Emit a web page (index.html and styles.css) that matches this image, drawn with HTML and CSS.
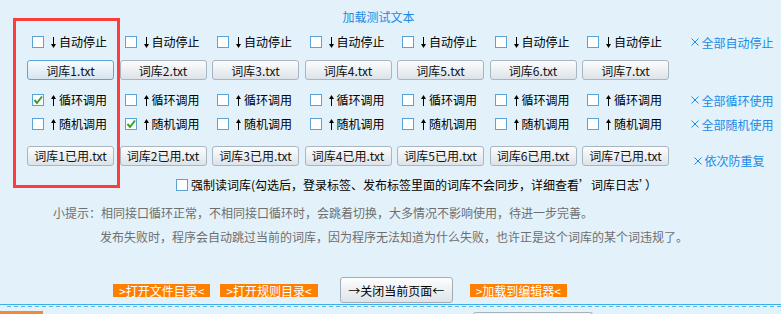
FILE: index.html
```html
<!DOCTYPE html>
<html lang="zh-CN">
<head>
    <meta charset="UTF-8">
    <title>加载测试文本</title>
    <link rel="stylesheet" href="styles.css">
</head>
<body>
<div class="page">
    <div class="title">加载测试文本</div>

    <div class="row r1">
        <label class="opt"><span class="cb"></span><svg class="arrow" width="5" height="11" viewBox="0 0 5 11"><path d="M2.5 0v8" stroke="#000" stroke-width="1"/><path d="M0 7h5l-2.5 4z"/></svg>自动停止</label>
        <label class="opt"><span class="cb"></span><svg class="arrow" width="5" height="11" viewBox="0 0 5 11"><path d="M2.5 0v8" stroke="#000" stroke-width="1"/><path d="M0 7h5l-2.5 4z"/></svg>自动停止</label>
        <label class="opt"><span class="cb"></span><svg class="arrow" width="5" height="11" viewBox="0 0 5 11"><path d="M2.5 0v8" stroke="#000" stroke-width="1"/><path d="M0 7h5l-2.5 4z"/></svg>自动停止</label>
        <label class="opt"><span class="cb"></span><svg class="arrow" width="5" height="11" viewBox="0 0 5 11"><path d="M2.5 0v8" stroke="#000" stroke-width="1"/><path d="M0 7h5l-2.5 4z"/></svg>自动停止</label>
        <label class="opt"><span class="cb"></span><svg class="arrow" width="5" height="11" viewBox="0 0 5 11"><path d="M2.5 0v8" stroke="#000" stroke-width="1"/><path d="M0 7h5l-2.5 4z"/></svg>自动停止</label>
        <label class="opt"><span class="cb"></span><svg class="arrow" width="5" height="11" viewBox="0 0 5 11"><path d="M2.5 0v8" stroke="#000" stroke-width="1"/><path d="M0 7h5l-2.5 4z"/></svg>自动停止</label>
        <label class="opt"><span class="cb"></span><svg class="arrow" width="5" height="11" viewBox="0 0 5 11"><path d="M2.5 0v8" stroke="#000" stroke-width="1"/><path d="M0 7h5l-2.5 4z"/></svg>自动停止</label>
        <a class="link"><svg class="x" width="8" height="8" viewBox="0 0 8 8"><path d="M0.5 0.5l7 7M7.5 0.5l-7 7" stroke="#1a8ae6" stroke-width="1"/></svg>全部自动停止</a>
    </div>

    <div class="row r2">
        <button class="btn active">词库1.txt</button>
        <button class="btn">词库2.txt</button>
        <button class="btn">词库3.txt</button>
        <button class="btn">词库4.txt</button>
        <button class="btn">词库5.txt</button>
        <button class="btn">词库6.txt</button>
        <button class="btn">词库7.txt</button>
    </div>

    <div class="row r3">
        <label class="opt"><span class="cb on"><svg width="10" height="10" viewBox="0 0 10 10"><path d="M1.5 5l2.5 3 5-6.5" fill="none" stroke="#3c9c2c" stroke-width="2"/></svg></span><svg class="arrow" width="5" height="11" viewBox="0 0 5 11"><path d="M2.5 3v8" stroke="#000" stroke-width="1"/><path d="M0 4h5l-2.5 -4z"/></svg>循环调用</label>
        <label class="opt"><span class="cb"></span><svg class="arrow" width="5" height="11" viewBox="0 0 5 11"><path d="M2.5 3v8" stroke="#000" stroke-width="1"/><path d="M0 4h5l-2.5 -4z"/></svg>循环调用</label>
        <label class="opt"><span class="cb"></span><svg class="arrow" width="5" height="11" viewBox="0 0 5 11"><path d="M2.5 3v8" stroke="#000" stroke-width="1"/><path d="M0 4h5l-2.5 -4z"/></svg>循环调用</label>
        <label class="opt"><span class="cb"></span><svg class="arrow" width="5" height="11" viewBox="0 0 5 11"><path d="M2.5 3v8" stroke="#000" stroke-width="1"/><path d="M0 4h5l-2.5 -4z"/></svg>循环调用</label>
        <label class="opt"><span class="cb"></span><svg class="arrow" width="5" height="11" viewBox="0 0 5 11"><path d="M2.5 3v8" stroke="#000" stroke-width="1"/><path d="M0 4h5l-2.5 -4z"/></svg>循环调用</label>
        <label class="opt"><span class="cb"></span><svg class="arrow" width="5" height="11" viewBox="0 0 5 11"><path d="M2.5 3v8" stroke="#000" stroke-width="1"/><path d="M0 4h5l-2.5 -4z"/></svg>循环调用</label>
        <label class="opt"><span class="cb"></span><svg class="arrow" width="5" height="11" viewBox="0 0 5 11"><path d="M2.5 3v8" stroke="#000" stroke-width="1"/><path d="M0 4h5l-2.5 -4z"/></svg>循环调用</label>
        <a class="link"><svg class="x" width="8" height="8" viewBox="0 0 8 8"><path d="M0.5 0.5l7 7M7.5 0.5l-7 7" stroke="#1a8ae6" stroke-width="1"/></svg>全部循环使用</a>
    </div>

    <div class="row r4">
        <label class="opt"><span class="cb"></span><svg class="arrow" width="5" height="11" viewBox="0 0 5 11"><path d="M2.5 3v8" stroke="#000" stroke-width="1"/><path d="M0 4h5l-2.5 -4z"/></svg>随机调用</label>
        <label class="opt"><span class="cb on"><svg width="10" height="10" viewBox="0 0 10 10"><path d="M1.5 5l2.5 3 5-6.5" fill="none" stroke="#3c9c2c" stroke-width="2"/></svg></span><svg class="arrow" width="5" height="11" viewBox="0 0 5 11"><path d="M2.5 3v8" stroke="#000" stroke-width="1"/><path d="M0 4h5l-2.5 -4z"/></svg>随机调用</label>
        <label class="opt"><span class="cb"></span><svg class="arrow" width="5" height="11" viewBox="0 0 5 11"><path d="M2.5 3v8" stroke="#000" stroke-width="1"/><path d="M0 4h5l-2.5 -4z"/></svg>随机调用</label>
        <label class="opt"><span class="cb"></span><svg class="arrow" width="5" height="11" viewBox="0 0 5 11"><path d="M2.5 3v8" stroke="#000" stroke-width="1"/><path d="M0 4h5l-2.5 -4z"/></svg>随机调用</label>
        <label class="opt"><span class="cb"></span><svg class="arrow" width="5" height="11" viewBox="0 0 5 11"><path d="M2.5 3v8" stroke="#000" stroke-width="1"/><path d="M0 4h5l-2.5 -4z"/></svg>随机调用</label>
        <label class="opt"><span class="cb"></span><svg class="arrow" width="5" height="11" viewBox="0 0 5 11"><path d="M2.5 3v8" stroke="#000" stroke-width="1"/><path d="M0 4h5l-2.5 -4z"/></svg>随机调用</label>
        <label class="opt"><span class="cb"></span><svg class="arrow" width="5" height="11" viewBox="0 0 5 11"><path d="M2.5 3v8" stroke="#000" stroke-width="1"/><path d="M0 4h5l-2.5 -4z"/></svg>随机调用</label>
        <a class="link"><svg class="x" width="8" height="8" viewBox="0 0 8 8"><path d="M0.5 0.5l7 7M7.5 0.5l-7 7" stroke="#1a8ae6" stroke-width="1"/></svg>全部随机使用</a>
    </div>

    <div class="row r5">
        <button class="btn">词库1已用.txt</button>
        <button class="btn">词库2已用.txt</button>
        <button class="btn">词库3已用.txt</button>
        <button class="btn">词库4已用.txt</button>
        <button class="btn">词库5已用.txt</button>
        <button class="btn">词库6已用.txt</button>
        <button class="btn">词库7已用.txt</button>
        <a class="link link-low"><svg class="x" width="8" height="8" viewBox="0 0 8 8"><path d="M0.5 0.5l7 7M7.5 0.5l-7 7" stroke="#1a8ae6" stroke-width="1"/></svg>依次防重复</a>
    </div>

    <div class="force">
        <label class="opt"><span class="cb"></span>强制读词库(勾选后，登录标签、发布标签里面的词库不会同步，详细查看’词库日志’）</label>
    </div>

    <p class="hint hint1">小提示：相同接口循环正常，不相同接口循环时，会跳着切换，大多情况不影响使用，待进一步完善。</p>
    <p class="hint hint2">发布失败时，程序会自动跳过当前的词库，因为程序无法知道为什么失败，也许正是这个词库的某个词违规了。</p>

    <div class="actions">
        <a class="tag tag1">&gt;打开文件目录&lt;</a>
        <a class="tag tag2">&gt;打开规则目录&lt;</a>
        <button class="close">→关闭当前页面←</button>
        <a class="tag tag3">&gt;加载到编辑器&lt;</a>
    </div>

    <div class="rule"></div>
    <div class="dash"></div>
    <div class="next">
        <span class="next-tab"></span>
        <span class="next-box"></span>
    </div>

    <div class="highlight"></div>
</div>
</body>
</html>
```

FILE: styles.css
```css
body {
    margin: 0;
    background-color: #e3f2fa;
    font-family: "Noto Sans CJK SC", sans-serif;
    font-size: 12px;
    color: #000;
}
.page {
    position: relative;
    height: 314px;
    overflow: hidden;
}
.title {
    text-align: center;
    color: #1a8ae6;
    line-height: 14px;
    padding-top: 10px;
    padding-right: 24px;
}
.row {
    display: grid;
    grid-template-columns: repeat(7, 87px) auto;
    column-gap: 5.5px;
    align-items: center;
    height: 20px;
    margin-left: 27px;
}
.r1 { margin-top: 8px; }
.r2 { margin-top: 8px; }
.r3 { margin-top: 10px; }
.r4 { margin-top: 4px; }
.r5 { margin-top: 8px; }
.opt {
    display: flex;
    align-items: center;
    padding-left: 5px;
    white-space: nowrap;
    line-height: 20px;
}
.cb {
    box-sizing: border-box;
    width: 12px;
    height: 12px;
    border: 1px solid #5aa3d8;
    background: #fff;
    display: flex;
    align-items: center;
    justify-content: center;
}
.arrow {
    margin-left: 7px;
    margin-right: 3px;
}
.link {
    display: flex;
    align-items: center;
    color: #1a8ae6;
    padding-left: 16px;
    white-space: nowrap;
}
.link .x {
    margin-right: 3px;
}
.link-low {
    padding-left: 19px;
    margin-top: 10px;
}
.btn {
    box-sizing: border-box;
    height: 20px;
    padding: 0;
    font-family: "Noto Sans CJK SC", sans-serif;
    font-size: 12px;
    color: #111;
    border: 1px solid #a9b5c1;
    border-radius: 3px;
    background: linear-gradient(#fdfdfd, #dce3e9);
    white-space: nowrap;
    overflow: hidden;
}
.btn.active {
    border-color: #5aa6dc;
    background: linear-gradient(#f7fbfe, #d6e5f1);
}
.force {
    margin-top: 13px;
    padding-left: 171px;
}
.force .cb {
    margin-right: 3px;
}
.hint {
    margin: 0;
    color: #6e6e6e;
    line-height: 20px;
}
.hint1 {
    margin-top: 8px;
    padding-left: 53px;
}
.hint2 {
    margin-top: 4px;
    padding-left: 100px;
}
.actions {
    display: flex;
    align-items: center;
    height: 27px;
    margin-top: 30px;
    padding-left: 113px;
}
.tag {
    background: #ff8000;
    color: #fff;
    line-height: 13px;
    padding: 0 6px;
    white-space: nowrap;
}
.tag2 { margin-left: 10px; }
.tag3 { margin-left: 17px; }
.close {
    box-sizing: border-box;
    margin-left: 22px;
    margin-bottom: 1px;
    width: 113px;
    height: 26px;
    padding: 0;
    font-family: "Noto Sans CJK SC", sans-serif;
    font-size: 12px;
    color: #000;
    border: 1px solid #a4adb6;
    border-radius: 3px;
    background: linear-gradient(#fdfdfd, #dde4ea);
}
.rule {
    height: 1px;
    background: #3ab0e6;
}
.dash {
    height: 1px;
    margin: 1px 0 0 7px;
    background: repeating-linear-gradient(90deg, #56b8ea 0 4px, transparent 4px 7px);
}
.next {
    display: flex;
    margin-top: 4px;
}
.next-tab {
    width: 43px;
    height: 4px;
    background: #f08a3a;
}
.next-box {
    box-sizing: border-box;
    width: 120px;
    height: 4px;
    margin-left: 430px;
    margin-top: 1px;
    border: 1px solid #a8b0b8;
    border-bottom: 0;
    border-radius: 3px 3px 0 0;
    background: #f4f6f8;
}
.highlight {
    position: absolute;
    left: 13px;
    top: 18px;
    width: 101px;
    height: 164px;
    border: 3px solid #ff3b3b;
}
```
